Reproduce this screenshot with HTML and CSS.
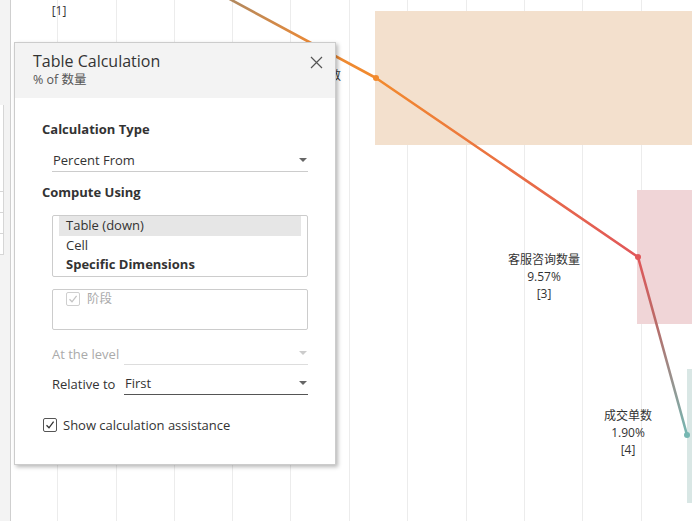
FILE: index.html
```html
<!DOCTYPE html>
<html lang="en">
<head>
<meta charset="utf-8">
<title>Table Calculation</title>
<link rel="stylesheet" href="styles.css">
</head>
<body>
<div class="app">
  <aside class="rail">
    <div class="rail-box">
      <div class="rail-cell"></div>
      <div class="rail-cell"></div>
      <div class="rail-cell"></div>
    </div>
  </aside>
  <main class="viz">
    <svg class="chart" width="681" height="521" viewBox="11 0 681 521" xmlns="http://www.w3.org/2000/svg">
      <defs>
        <linearGradient id="lineGrad" gradientUnits="userSpaceOnUse" x1="0" y1="0" x2="0" y2="521">
          <stop offset="0" stop-color="#b2895f"/>
          <stop offset="0.08" stop-color="#e98937"/>
          <stop offset="0.15" stop-color="#f28a2d"/>
          <stop offset="0.49" stop-color="#e15759"/>
          <stop offset="0.62" stop-color="#b96b68"/>
          <stop offset="0.835" stop-color="#76b7b2"/>
        </linearGradient>
      </defs>
      <g class="grid">
        <line x1="57.5" y1="0" x2="57.5" y2="521"/>
        <line x1="116.5" y1="0" x2="116.5" y2="521"/>
        <line x1="174.5" y1="0" x2="174.5" y2="521"/>
        <line x1="232.5" y1="0" x2="232.5" y2="521"/>
        <line x1="290.5" y1="0" x2="290.5" y2="521"/>
        <line x1="349.5" y1="0" x2="349.5" y2="521"/>
        <line x1="407.5" y1="0" x2="407.5" y2="521"/>
        <line x1="466.5" y1="0" x2="466.5" y2="521"/>
        <line x1="524.5" y1="0" x2="524.5" y2="521"/>
        <line x1="582.5" y1="0" x2="582.5" y2="521"/>
        <line x1="641.5" y1="0" x2="641.5" y2="521"/>
      </g>
      <rect x="375" y="11" width="317" height="134" fill="#f3e0cd"/>
      <rect x="637" y="190" width="55" height="134" fill="#f0d5d7"/>
      <rect x="687" y="369" width="5" height="134" fill="#d9e7e5"/>
      <polyline class="trend" points="200,-17 376,78 638,257 687,435" stroke="url(#lineGrad)"/>
      <circle cx="376" cy="78" r="3" fill="#f28a2d"/>
      <circle cx="638" cy="257" r="3" fill="#e15759"/>
      <circle cx="687" cy="435" r="3" fill="#76b7b2"/>
      <g class="labels">
        <text x="59" y="15">[1]</text>
        <text x="317" y="80">留资人数</text>
        <text x="310" y="97">25.6%</text>
        <text x="310" y="113">[2]</text>
        <text x="544" y="264">客服咨询数量</text>
        <text x="544" y="281">9.57%</text>
        <text x="544" y="298">[3]</text>
        <text x="628" y="420">成交单数</text>
        <text x="628" y="437">1.90%</text>
        <text x="628" y="454">[4]</text>
      </g>
    </svg>
  </main>

  <section class="dialog">
    <header class="dlg-head">
      <div class="dlg-titles">
        <div class="dlg-title">Table Calculation</div>
        <div class="dlg-sub">% of 数量</div>
      </div>
      <svg class="dlg-close" width="13" height="13" viewBox="0 0 13 13">
        <path d="M1 1 L12 12 M12 1 L1 12" stroke="#555" stroke-width="1.2" fill="none"/>
      </svg>
    </header>
    <div class="dlg-body">
      <div class="sec-title first">Calculation Type</div>
      <div class="select calc-type">
        <span class="select-text">Percent From</span>
        <span class="caret"></span>
      </div>
      <div class="sec-title compute">Compute Using</div>
      <div class="listbox">
        <div class="list-row selected">Table (down)</div>
        <div class="list-row">Cell</div>
        <div class="list-row bold">Specific Dimensions</div>
      </div>
      <div class="dims">
        <div class="dim-item">
          <span class="cbox disabled">
            <svg width="12" height="12" viewBox="0 0 12 12"><path d="M2.5 6.2 L5 8.8 L9.6 2.8" stroke="#c4c4c4" stroke-width="1.3" fill="none"/></svg>
          </span>
          <span class="dim-label">阶段</span>
        </div>
      </div>
      <div class="field-row level">
        <span class="field-label disabled">At the level</span>
        <div class="select disabled">
          <span class="select-text"></span>
          <span class="caret"></span>
        </div>
      </div>
      <div class="field-row relative">
        <span class="field-label">Relative to</span>
        <div class="select dark">
          <span class="select-text">First</span>
          <span class="caret"></span>
        </div>
      </div>
      <label class="assist">
        <span class="cbox">
          <svg width="12" height="12" viewBox="0 0 12 12"><path d="M2.5 6.2 L5 8.8 L9.6 2.6" stroke="#333" stroke-width="1.3" fill="none"/></svg>
        </span>
        <span class="assist-text">Show calculation assistance</span>
      </label>
    </div>
  </section>
</div>
</body>
</html>
```

FILE: styles.css
```css
* { box-sizing: border-box; }

html, body {
  margin: 0;
  padding: 0;
  background: #ffffff;
}

body {
  width: 692px;
  height: 521px;
  overflow: hidden;
  font-family: "Open Sans", "Noto Sans CJK SC", sans-serif;
  color: #333333;
}

.app {
  position: relative;
  display: flex;
  width: 692px;
  height: 521px;
}

.rail {
  width: 11px;
  flex: none;
  background: #f3f3f3;
  border-right: 1px solid #cfcfcf;
  padding-top: 105px;
}

.rail-box {
  width: 4px;
  height: 150px;
  background: #ffffff;
  border-right: 1px solid #d6d6d6;
  border-bottom: 1px solid #d6d6d6;
  display: flex;
  flex-direction: column;
  padding-top: 86px;
}

.rail-cell {
  height: 31px;
  border-top: 1px solid #d6d6d6;
}

.viz {
  position: relative;
  flex: 1;
  height: 521px;
}

.chart {
  display: block;
}

.grid line {
  stroke: #ececec;
  stroke-width: 1;
}

.trend {
  fill: none;
  stroke-width: 2.6;
  stroke-linejoin: round;
}

.labels text {
  font-family: "Open Sans", "Noto Sans CJK SC", sans-serif;
  font-size: 12px;
  fill: #333333;
  text-anchor: middle;
}

/* Dialog */
.dialog {
  position: absolute;
  left: 14px;
  top: 42px;
  width: 322px;
  height: 423px;
  background: #ffffff;
  border: 1px solid #cccccc;
  box-shadow: 2px 2px 4px rgba(0, 0, 0, 0.28);
  display: flex;
  flex-direction: column;
}

.dlg-head {
  height: 55px;
  flex: none;
  background: #f3f3f3;
  display: flex;
  justify-content: space-between;
  align-items: flex-start;
  padding: 7px 12px 0 18px;
}

.dlg-title {
  font-size: 16px;
  line-height: 22px;
  color: #333333;
}

.dlg-sub {
  font-size: 12.5px;
  line-height: 16px;
  color: #555555;
}

.dlg-close {
  margin-top: 6px;
}

.dlg-body {
  padding-left: 27px;
  display: flex;
  flex-direction: column;
  align-items: flex-start;
  font-size: 13px;
}

.sec-title {
  font-weight: 700;
  line-height: 18px;
  font-size: 13px;
  color: #333333;
}

.sec-title.first { margin-top: 22px; }
.sec-title.compute { margin-top: 11px; }

.select {
  display: flex;
  align-items: center;
  justify-content: space-between;
  height: 23px;
  border-bottom: 1px solid #cccccc;
  padding: 0 1px 0 1px;
}

.select.calc-type {
  width: 256px;
  margin-left: 10px;
  margin-top: 11px;
}

.select-text {
  line-height: 20px;
  color: #333333;
}

.caret {
  width: 0;
  height: 0;
  border-left: 4px solid transparent;
  border-right: 4px solid transparent;
  border-top: 4px solid #666666;
}

.select.disabled { border-bottom-color: #dddddd; }
.select.disabled .caret { border-top-color: #cccccc; }
.select.dark { border-bottom-color: #555555; }

.listbox {
  margin-top: 14px;
  margin-left: 10px;
  width: 256px;
  height: 62px;
  border: 1px solid #cccccc;
  border-radius: 2px;
  padding: 0 6px;
}

.list-row {
  line-height: 19.5px;
  height: 19.5px;
  padding-left: 7px;
  color: #333333;
}

.list-row.selected { background: #e6e6e6; }
.list-row.bold { font-weight: 700; }

.dims {
  margin-top: 12px;
  margin-left: 10px;
  width: 256px;
  height: 41px;
  border: 1px solid #cccccc;
  border-radius: 2px;
  padding: 2px 0 0 13px;
}

.dim-item {
  display: flex;
  align-items: center;
  gap: 7px;
}

.dim-label {
  color: #aaaaaa;
  font-size: 12.5px;
  line-height: 14px;
}

.cbox {
  width: 14px;
  height: 14px;
  border: 1px solid #555555;
  border-radius: 2px;
  display: flex;
  align-items: center;
  justify-content: center;
  background: #ffffff;
}

.cbox.disabled { border-color: #cfcfcf; }

.field-row {
  display: flex;
  align-items: center;
  margin-left: 10px;
  width: 256px;
}

.field-row.level { margin-top: 12px; }
.field-row.relative { margin-top: 7px; }

.field-label {
  width: 72px;
  flex: none;
  color: #333333;
  line-height: 20px;
}

.field-label.disabled { color: #aaaaaa; }

.field-row .select { flex: 1; }

.assist {
  display: flex;
  align-items: center;
  gap: 6px;
  margin-top: 20px;
  margin-left: 1px;
}

.assist-text {
  line-height: 20px;
  color: #333333;
}
```
